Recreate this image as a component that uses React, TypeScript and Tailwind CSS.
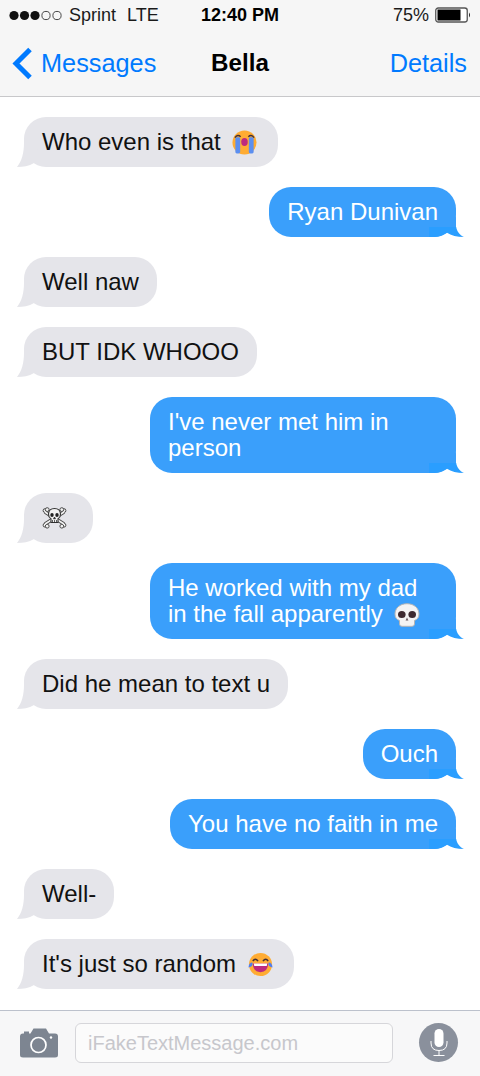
import React from "react";

const CryEmoji = () => (
  <svg viewBox="0 0 26 26" className="inline-block w-[25px] h-[25px] align-[-1px] -my-1 ml-[5px] mr-[3px]">
    <circle cx="13" cy="13" r="12.5" fill="#ffac33" />
    <rect x="3.5" y="7.5" width="5" height="17" rx="1.5" fill="#5c8ff0" />
    <rect x="17.5" y="7.5" width="5" height="17" rx="1.5" fill="#5c8ff0" />
    <path d="M3 8 q3 -4 6 -1 M17 7 q3 -3 6 1" fill="none" stroke="#40303a" strokeWidth="1.4" />
    <ellipse cx="13" cy="12.5" rx="3.4" ry="4.2" fill="#bd2a7e" />
  </svg>
);

const JoyEmoji = () => (
  <svg viewBox="0 0 26 26" className="inline-block w-[25px] h-[25px] align-[-1px] -my-1 ml-[5px] mr-[3px]">
    <circle cx="13" cy="13" r="12" fill="#ffac33" />
    <path d="M5 9.5 q2.5 -4 5.5 0 M15.5 9.5 q3 -4 5.5 0" fill="none" stroke="#40303a" strokeWidth="1.5" />
    <path d="M5 12 H21 Q20.5 21 13 21 Q5.5 21 5 12 Z" fill="#bd2a7e" />
    <path d="M6 12 H20 L19.5 14.5 H6.5 Z" fill="#ffffff" />
    <path d="M0.5 16 Q1 11 4.5 11 Q6 15 0.5 16 Z" fill="#4f7df0" />
    <path d="M25.5 16 Q25 11 21.5 11 Q20 15 25.5 16 Z" fill="#4f7df0" />
  </svg>
);

const SkullEmoji = () => (
  <svg viewBox="0 0 26 24" className="inline-block w-[26px] h-[24px] align-[-1px] -my-1 ml-[5px]">
    <path d="M13 0.7 C6 0.7 1 5 1 11 C1 15 3 16.5 5.5 17.5 V21 Q5.5 23.3 8 23.3 H18 Q20.5 23.3 20.5 21 V17.5 C23 16.5 25 15 25 11 C25 5 20 0.7 13 0.7 Z" fill="#f4f4f4" stroke="#b5b5b5" strokeWidth="1" />
    <ellipse cx="7.8" cy="11.5" rx="3.8" ry="3.6" fill="#3d2a30" />
    <ellipse cx="18.2" cy="11.5" rx="3.8" ry="3.6" fill="#3d2a30" />
    <path d="M13 14.5 l1.4 3 h-2.8 Z" fill="#6b5a60" />
  </svg>
);

const SkullCrossbones = () => (
  <svg viewBox="0 0 33 26" className="inline-block h-[26px] w-[33px] align-top">
    <g stroke="#4a4a4a" strokeWidth="1" fill="#f2f2f2">
      <path d="M3 7 L22 19 M22 7 L3 19" stroke="#4a4a4a" strokeWidth="3.6" />
      <circle cx="3" cy="5.6" r="1.9" />
      <circle cx="5.2" cy="4.6" r="1.9" />
      <circle cx="22" cy="5.6" r="1.9" />
      <circle cx="19.8" cy="4.6" r="1.9" />
      <circle cx="3" cy="20.2" r="1.9" />
      <circle cx="5.2" cy="21.2" r="1.9" />
      <circle cx="22" cy="20.2" r="1.9" />
      <circle cx="19.8" cy="21.2" r="1.9" />
      <path d="M3 7 L22 19 M22 7 L3 19" stroke="#f2f2f2" strokeWidth="1.6" />
      <path d="M12.5 3.5 C8.5 3.5 6.5 6.2 6.5 9.2 C6.5 11.5 7.6 13 9 13.8 V17.5 H16 V13.8 C17.4 13 18.5 11.5 18.5 9.2 C18.5 6.2 16.5 3.5 12.5 3.5 Z" stroke="#333333" strokeWidth="1.1" />
    </g>
    <ellipse cx="10" cy="10" rx="1.7" ry="1.9" fill="#222222" />
    <ellipse cx="15" cy="10" rx="1.7" ry="1.9" fill="#222222" />
    <path d="M12.5 12 l1 1.8 h-2 Z M10.5 15 v2.5 M12.5 15 v2.5 M14.5 15 v2.5" fill="#222222" stroke="#222222" strokeWidth="0.7" />
  </svg>
);

const TailLeft = () => (
  <svg viewBox="0 0 24 24" className="absolute left-[-8px] bottom-0 w-6 h-6">
    <path d="M8 0 C8 9 6 18 1 24 C7 24 13 23 18 20 L22 6 Z" fill="#e5e5ea" />
  </svg>
);

const TailRight = () => (
  <svg viewBox="0 0 44 24" className="absolute right-[-8px] bottom-0 w-11 h-6">
    <path d="M36 2 L36 15 L31 15 Z" fill="#3a9ffb" />
    <path d="M9 14 H36.2 C36.8 18 39.5 22 44 24 C37 24 31 22.5 27 19.7 A22 22 0 0 1 14 24 H9 Z" fill="#2a9eff" />
  </svg>
);

function In({ children }: { children: React.ReactNode }) {
  return (
    <div className="flex justify-start">
      <div className="relative max-w-[306px] rounded-[22px] bg-[#e5e5ea] px-[18px] py-3 text-[24px] leading-[26px] text-[#111111]">
        <TailLeft />
        <span className="relative">{children}</span>
      </div>
    </div>
  );
}

function Out({ children }: { children: React.ReactNode }) {
  return (
    <div className="flex justify-end">
      <div className="relative max-w-[306px] rounded-[22px] bg-[#3a9ffb] px-[18px] py-3 text-[24px] leading-[26px] text-white">
        <TailRight />
        <span className="relative">{children}</span>
      </div>
    </div>
  );
}

export default function App() {
  return (
    <div className="flex h-[1076px] w-[480px] flex-col overflow-hidden bg-white font-['Liberation_Sans',Arial,sans-serif]">
      <header className="h-[97px] shrink-0 border-b border-[#c8c8ca] bg-[#f6f6f6]">
        <div className="grid h-[30px] grid-cols-[1fr_auto_1fr] items-center text-[18px] leading-[30px] text-[#1a1a1a]">
          <div className="flex items-center pl-[9px]">
            <svg viewBox="0 0 54 11" className="h-[11px] w-[54px]">
              <circle cx="5" cy="5.5" r="4.6" fill="#111" />
              <circle cx="15.5" cy="5.5" r="4.6" fill="#111" />
              <circle cx="26" cy="5.5" r="4.6" fill="#111" />
              <circle cx="37" cy="5.5" r="4.1" fill="none" stroke="#333" strokeWidth="0.9" />
              <circle cx="48" cy="5.5" r="4.1" fill="none" stroke="#333" strokeWidth="0.9" />
            </svg>
            <span className="ml-[6px]">Sprint</span>
            <span className="ml-[11px]">LTE</span>
          </div>
          <div className="font-bold text-black">12:40 PM</div>
          <div className="flex items-center justify-end pr-[9px]">
            <span>75%</span>
            <svg viewBox="0 0 36 16" className="ml-[6px] h-4 w-9">
              <rect x="0.75" y="1" width="31.5" height="14" rx="2.5" fill="#fff" stroke="#555" strokeWidth="1.3" />
              <rect x="2.5" y="2.5" width="23" height="11" fill="#000" />
              <path d="M34 5.5 q2 2.5 0 5 Z" fill="#222" />
            </svg>
          </div>
        </div>
        <nav className="grid h-[66px] grid-cols-[1fr_auto_1fr] items-center text-[25.3px] leading-[30px]">
          <div className="flex items-center pl-3 text-[#007aff]">
            <svg viewBox="0 0 21 33" className="h-[33px] w-[21px]">
              <path d="M18 2.5 L4 16.5 L18 30.5" fill="none" stroke="#007aff" strokeWidth="5" />
            </svg>
            <span className="ml-2">Messages</span>
          </div>
          <div className="text-[24.2px] font-bold text-black">Bella</div>
          <div className="pr-[13px] text-right text-[#007aff]">Details</div>
        </nav>
      </header>

      <main className="flex flex-1 flex-col gap-5 overflow-hidden px-6 pt-5">
        <In>Who even is that <CryEmoji /></In>
        <Out>Ryan Dunivan</Out>
        <In>Well naw</In>
        <In>BUT IDK WHOOO</In>
        <Out>I've never met him in person</Out>
        <In><SkullCrossbones /></In>
        <Out>He worked with my dad in the fall apparently <SkullEmoji /></Out>
        <In>Did he mean to text u</In>
        <Out>Ouch</Out>
        <Out>You have no faith in me</Out>
        <In>Well-</In>
        <In>It's just so random <JoyEmoji /></In>
      </main>

      <footer className="flex h-[66px] shrink-0 items-center border-t border-[#bcc1cc] bg-[#f7f7f8] pb-[2px] pl-5 pr-[22px]">
        <svg viewBox="0 0 38 30" className="h-[30px] w-[38px] shrink-0">
          <path d="M3 5.5 H4 V3.5 H9 V5.5 H10.5 L13.5 0.5 H26 L29 5.5 H35 Q38 5.5 38 8.5 V27 Q38 29.5 35 29.5 H3 Q0 29.5 0 27 V8.5 Q0 5.5 3 5.5 Z" fill="#7d8591" />
          <circle cx="18.5" cy="17" r="7.5" fill="none" stroke="#ffffff" strokeWidth="1.7" />
          <circle cx="31" cy="9.5" r="1.2" fill="#ffffff" />
        </svg>
        <div className="ml-[17px] flex h-10 w-[318px] items-center rounded-[6px] border border-[#d6d6da] bg-[#fbfbfb] pl-3 text-[20px] text-[#c7c7cc]">
          iFakeTextMessage.com
        </div>
        <div className="ml-auto flex h-[39px] w-[39px] items-center justify-center rounded-full bg-[#8a909c]">
          <svg viewBox="0 0 20 30" className="h-[30px] w-5">
            <rect x="5.5" y="1" width="9" height="18" rx="4.5" fill="#ffffff" />
            <path d="M2 13 V15 Q2 22.5 10 22.5 Q18 22.5 18 15 V13 M10 22.5 V27 M4.5 27.5 H15.5" fill="none" stroke="#ffffff" strokeWidth="1" />
          </svg>
        </div>
      </footer>
    </div>
  );
}
